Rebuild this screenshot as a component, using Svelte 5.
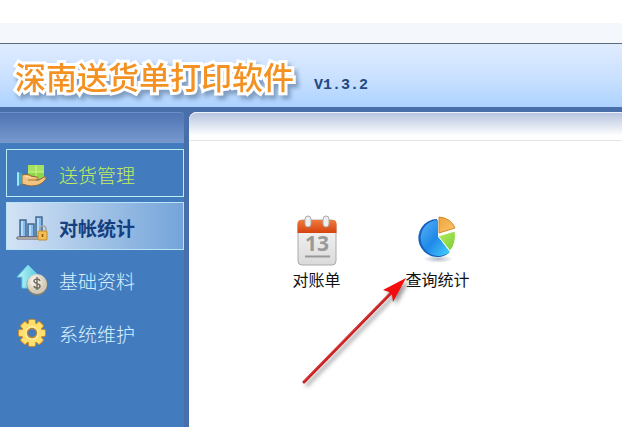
<script lang="ts">
  const menu = [
    { id: 'delivery', label: '送货管理' },
    { id: 'statement', label: '对帐统计' },
    { id: 'basic', label: '基础资料' },
    { id: 'system', label: '系统维护' },
  ]

  const teeth = [0, 45, 90, 135]

  let active = $state('statement')
  let hovered = $state('delivery')
</script>

<div class="app">
  <div class="window-top"></div>
  <header>
    <h1>深南送货单打印软件</h1>
    <span class="version">V1.3.2</span>
  </header>

  <div class="body">
    <aside>
      <div class="side-cap"></div>
      <nav>
        {#each menu as item (item.id)}
          <button
            type="button"
            class="nav-item"
            class:active={active === item.id}
            class:hovered={hovered === item.id && active !== item.id}
            onclick={() => (active = item.id)}
            onmouseenter={() => (hovered = item.id)}
          >
            <svg width="32" height="32" viewBox="0 0 32 32" aria-hidden="true">
              {#if item.id === 'delivery'}
                <path d="M12 7h16v15H12z" fill="#8fd648" />
                <path d="M12 7h16v7H12z" fill="#a5e25f" />
                <path d="M20 7v15M12 14h16" stroke="#cdf595" stroke-width="1" />
                <path d="M6 17c4-1 6-1 9 1l6 1c2 1 1 3-1 3h3l5-3c2-1 3 1 1 3-4 6-14 7-19 5l-4-1z" fill="#f1c582" stroke="#8f6532" stroke-width="1" />
                <path d="M12 22h7l4-1" fill="none" stroke="#a8743a" stroke-width="1" />
                <path d="M9 19c3-1 5 0 6 1" fill="none" stroke="#ffe6b4" stroke-width="1" />
                <path d="M1 14l5 1v11l-5 2z" fill="#35a9cf" />
                <path d="M1 14l2 .5v13l-2 .5z" fill="#9be8ef" />
              {:else if item.id === 'statement'}
                <g fill="#7fbdf2" stroke="#4a688c" stroke-width="1.500">
                  <path d="M4 9h6v17H4zM12 13h6v13h-6zM20 6h6v20h-6z" />
                </g>
                <path d="M6 10v15M14 14v11M22 7v18" stroke="#c4e6ff" stroke-width="1.500" />
                <path d="M1 26h22v2H1z" fill="#f8ead8" stroke="#655f68" stroke-width="1" />
                <path d="M24 21v-3c0-4 6-4 6 0v3" fill="none" stroke="#a3a5a8" stroke-width="1.500" />
                <rect x="22" y="20" width="9" height="9" rx="1" fill="#f4bd50" stroke="#c08a34" />
                <path d="M26.500 23v3" stroke="#835317" stroke-width="1.500" />
              {:else if item.id === 'basic'}
                <path d="M12 1l12 12h-5v11H6V13H1z" fill="url(#up)" stroke="#5fcbe5" stroke-width="1" />
                <circle cx="21" cy="21" r="10.500" fill="#817f75" />
                <circle cx="21" cy="20" r="10" fill="url(#coin)" />
                <path d="M24 17c-1-3-6-2-6 0 0 3 6 2 6 5s-5 3-6 0M21 13v13" fill="none" stroke="#756b62" stroke-width="1.500" />
              {:else}
                <g fill="#c98c35">
                  {#each teeth as angle}
                    <rect x="12" y="2" width="8" height="28" rx="2" transform="rotate({angle} 16 16)" />
                  {/each}
                  <circle cx="16" cy="16" r="11" />
                </g>
                <g fill="#ffe06c">
                  {#each teeth as angle}
                    <rect x="13" y="3" width="6" height="26" rx="1" transform="rotate({angle} 16 16)" />
                  {/each}
                  <circle cx="16" cy="16" r="10" />
                </g>
                <circle cx="16" cy="16" r="7" fill="#ffeb9a" />
                <circle cx="16" cy="16" r="4.500" fill="#427cbe" stroke="#b5823c" stroke-width="1.500" />
              {/if}
            </svg>
            <span>{item.label}</span>
          </button>
        {/each}
      </nav>
    </aside>

    <main>
      <div class="panel-cap"></div>
      <div class="shortcuts">
        <button type="button" class="shortcut">
          <svg width="50" height="52" viewBox="0 0 50 52" aria-hidden="true">
            <rect x="6" y="5" width="38" height="45" rx="4" fill="url(#paper)" stroke="#aaa" />
            <path d="M5.500 18V9q0-4 4-4h31q4 0 4 4v9z" fill="url(#cap)" />
            <rect x="13" y="1" width="6" height="11" rx="3" fill="#eee" stroke="#aaa" />
            <rect x="31" y="1" width="6" height="11" rx="3" fill="#eee" stroke="#aaa" />
            <text x="25" y="36" class="day">13</text>
            <path d="M13 41.500h25" stroke="#999" stroke-width="2" />
          </svg>
          <span>对账单</span>
        </button>
        <button type="button" class="shortcut">
          <svg width="50" height="52" viewBox="0 0 50 52" aria-hidden="true">
            <ellipse cx="25" cy="44" rx="15" ry="4" fill="url(#ground)" />
            <path d="M24 4A19 19 0 1 0 36 38L24 22z" fill="#1464bf" />
            <path d="M25 5A18 18 0 1 0 37 37L25 21z" fill="url(#blue)" />
            <path d="M25 21l17-5q2 12-5 20z" fill="url(#green)" stroke="#fff" stroke-width="1" />
            <path d="M26 18V2q12 1 16 11z" fill="url(#orange)" stroke="#d48b28" stroke-width="1" />
          </svg>
          <span>查询统计</span>
        </button>
        <svg class="pointer" width="116" height="120" viewBox="0 0 116 120" aria-hidden="true">
          <path d="M5 109L92 20" stroke="#c81e22" stroke-width="3" stroke-linecap="round" />
          <path d="M5 108L92 19" stroke="#e0403c" stroke-width="1" />
          <path d="M107 5L84 17l6 2 3 3 1 7z" fill="#f30d0c" />
        </svg>
      </div>
    </main>
  </div>

  <svg class="defs" width="0" height="0" aria-hidden="true">
    <defs>
      <linearGradient id="up"><stop stop-color="#c4f8f6" /><stop offset="1" stop-color="#4cc5df" /></linearGradient>
      <radialGradient id="coin" cx=".4" cy=".35"><stop stop-color="#fffdf2" /><stop offset="1" stop-color="#d3cbb8" /></radialGradient>
      <linearGradient id="paper" x2="0" y2="1"><stop stop-color="#f8f8f8" /><stop offset="1" stop-color="#dadada" /></linearGradient>
      <linearGradient id="cap" x2="0" y2="1"><stop stop-color="#f27a3c" /><stop offset="1" stop-color="#d5420d" /></linearGradient>
      <linearGradient id="blue" x2="1" y2="1"><stop stop-color="#58b4f5" /><stop offset=".5" stop-color="#2088e8" /><stop offset="1" stop-color="#45d3ff" /></linearGradient>
      <linearGradient id="orange" x2="1" y2="1"><stop stop-color="#eda33d" /><stop offset="1" stop-color="#ffc66b" /></linearGradient>
      <linearGradient id="green" x2="1" y2="1"><stop stop-color="#b9ed5f" /><stop offset="1" stop-color="#76cd35" /></linearGradient>
      <radialGradient id="ground"><stop stop-color="#b3bdc8" /><stop offset="1" stop-color="#fff" /></radialGradient>
    </defs>
  </svg>
</div>

<style>
  :global(body) { margin: 0; }

  .app {
    display: flex;
    flex-direction: column;
    min-height: 100vh;
    background: #fff;
    font-family: "Noto Sans CJK SC", sans-serif;
  }

  .window-top {
    height: 20px;
    margin-top: 23px;
    background: #f4f7fc;
  }

  header {
    display: flex;
    align-items: center;
    gap: 20px;
    height: 63px;
    padding-left: 15px;
    border-top: 1px solid #5f6b78;
    border-bottom: 5px solid #486fa9;
    background: linear-gradient(#e0ecff, #c9e0ff 55%, #acd2ff);
  }

  h1 {
    margin: 0;
    color: #f39222;
    font-size: 31px;
    font-weight: 500;
    line-height: 60px;
    white-space: nowrap;
    -webkit-text-stroke: 6px #fff;
    paint-order: stroke fill;
    filter: drop-shadow(3px 4px 2px #7f9cc0);
  }

  .version {
    padding-top: 20px;
    color: #23497f;
    font: bold 15px "Liberation Mono", monospace;
  }

  .body {
    display: flex;
    flex: 1;
    background: #486fa9;
  }

  aside {
    flex: none;
    width: 184px;
    margin-right: 5px;
    background: #427cbe;
  }

  .side-cap {
    height: 30px;
    border-top: 1px solid #6b91c8;
    border-radius: 0 5px 0 0;
    background: linear-gradient(#4f74b3, #7799cf);
  }

  nav {
    display: flex;
    flex-direction: column;
    gap: 5px;
    padding: 6px 0 6px 6px;
  }

  .nav-item {
    display: flex;
    align-items: center;
    gap: 11px;
    box-sizing: border-box;
    height: 48px;
    padding: 2px 9px 0;
    border: 1px solid transparent;
    background: none;
    color: #d7efff;
    font-family: inherit;
    font-size: 19px;
    font-weight: 300;
    cursor: pointer;
  }

  .nav-item.hovered {
    border-color: #b9edf3;
    color: #c1f15c;
  }

  .nav-item.active {
    border-color: #b9e3f6;
    background: linear-gradient(90deg, #d3e3f5, #74a4d9);
    color: #143f80;
    font-weight: 700;
  }

  main {
    flex: 1;
    min-width: 0;
    border-radius: 8px 0 0 0;
    background: #fff;
  }

  .panel-cap {
    height: 27px;
    border-top: 1px solid #eef3fb;
    border-bottom: 1px solid #e4e5e8;
    border-radius: 8px 0 0 0;
    background: linear-gradient(#b8c5df, #fff 85%);
  }

  .shortcuts {
    position: relative;
    display: flex;
    padding: 74px 0 0 67px;
  }

  .shortcut {
    display: flex;
    flex: none;
    flex-direction: column;
    align-items: center;
    width: 121px;
    padding: 0;
    border: none;
    background: none;
    color: #111;
    font-family: inherit;
    font-size: 16px;
    line-height: 24px;
    cursor: pointer;
  }

  .day {
    fill: #999;
    font: bold 21px "Open Sans", sans-serif;
    text-anchor: middle;
  }

  .pointer {
    position: absolute;
    left: 110px;
    top: 132px;
    filter: drop-shadow(3px 3px 2px #999);
    pointer-events: none;
  }

  .defs { position: absolute; }
</style>
